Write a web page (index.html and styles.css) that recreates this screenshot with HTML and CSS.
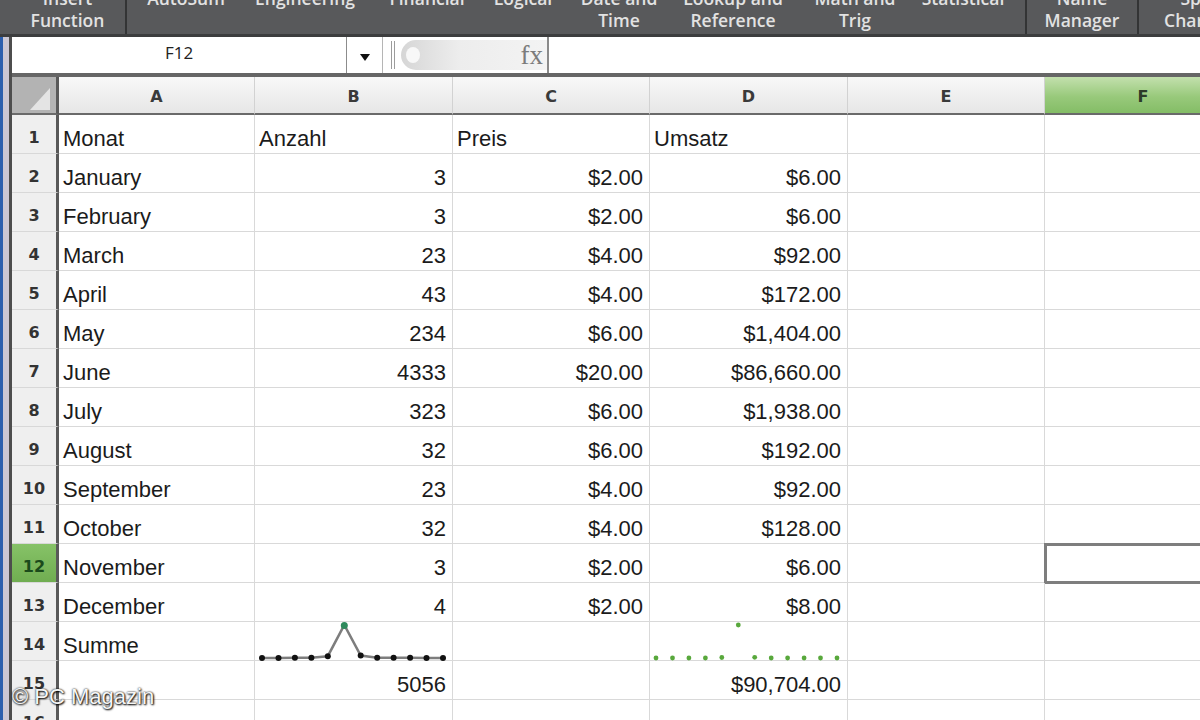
FILE: index.html
```html
<!DOCTYPE html>
<html lang="de">
<head>
    <meta charset="UTF-8">
    <meta name="viewport" content="width=device-width, initial-scale=1.0">
    <title>Umsatz - Sparklines</title>
    <link rel="stylesheet" href="styles.css">
</head>
<body>
    <div class="ribbon">
        <div class="tool tool-insert"><span>Insert</span><span>Function</span></div>
        <div class="tool-group">
            <div class="tool w-autosum"><span>AutoSum</span></div>
            <div class="tool w-engineering"><span>Engineering</span></div>
            <div class="tool w-financial"><span>Financial</span></div>
            <div class="tool w-logical"><span>Logical</span></div>
            <div class="tool w-date"><span>Date and</span><span>Time</span></div>
            <div class="tool w-lookup"><span>Lookup and</span><span>Reference</span></div>
            <div class="tool w-math"><span>Math and</span><span>Trig</span></div>
            <div class="tool w-stat"><span>Statistical</span></div>
        </div>
        <div class="tool tool-name"><span>Name</span><span>Manager</span></div>
        <div class="tool tool-special"><span>Special</span><span>Characters</span></div>
    </div>

    <div class="workspace">
        <div class="window-edge"></div>
        <div class="sheet">
            <div class="formula-bar">
                <div class="name-box">F12</div>
                <div class="name-drop"><span class="arrow"></span></div>
                <div class="grip"><span></span></div>
                <div class="fx-button"><span>fx</span></div>
                <div class="formula-input"></div>
            </div>

            <div class="grid">
                <div class="row head-row">
                    <div class="corner"><span class="corner-mark"></span></div>
                    <div class="col-head">A</div>
                    <div class="col-head">B</div>
                    <div class="col-head">C</div>
                    <div class="col-head">D</div>
                    <div class="col-head">E</div>
                    <div class="col-head active">F</div>
                </div>

                <div class="row">
                    <div class="row-head">1</div>
                    <div class="cell">Monat</div>
                    <div class="cell">Anzahl</div>
                    <div class="cell">Preis</div>
                    <div class="cell">Umsatz</div>
                    <div class="cell"></div>
                    <div class="cell"></div>
                </div>
                <div class="row">
                    <div class="row-head">2</div>
                    <div class="cell">January</div>
                    <div class="cell num">3</div>
                    <div class="cell num">$2.00</div>
                    <div class="cell num">$6.00</div>
                    <div class="cell"></div>
                    <div class="cell"></div>
                </div>
                <div class="row">
                    <div class="row-head">3</div>
                    <div class="cell">February</div>
                    <div class="cell num">3</div>
                    <div class="cell num">$2.00</div>
                    <div class="cell num">$6.00</div>
                    <div class="cell"></div>
                    <div class="cell"></div>
                </div>
                <div class="row">
                    <div class="row-head">4</div>
                    <div class="cell">March</div>
                    <div class="cell num">23</div>
                    <div class="cell num">$4.00</div>
                    <div class="cell num">$92.00</div>
                    <div class="cell"></div>
                    <div class="cell"></div>
                </div>
                <div class="row">
                    <div class="row-head">5</div>
                    <div class="cell">April</div>
                    <div class="cell num">43</div>
                    <div class="cell num">$4.00</div>
                    <div class="cell num">$172.00</div>
                    <div class="cell"></div>
                    <div class="cell"></div>
                </div>
                <div class="row">
                    <div class="row-head">6</div>
                    <div class="cell">May</div>
                    <div class="cell num">234</div>
                    <div class="cell num">$6.00</div>
                    <div class="cell num">$1,404.00</div>
                    <div class="cell"></div>
                    <div class="cell"></div>
                </div>
                <div class="row">
                    <div class="row-head">7</div>
                    <div class="cell">June</div>
                    <div class="cell num">4333</div>
                    <div class="cell num">$20.00</div>
                    <div class="cell num">$86,660.00</div>
                    <div class="cell"></div>
                    <div class="cell"></div>
                </div>
                <div class="row">
                    <div class="row-head">8</div>
                    <div class="cell">July</div>
                    <div class="cell num">323</div>
                    <div class="cell num">$6.00</div>
                    <div class="cell num">$1,938.00</div>
                    <div class="cell"></div>
                    <div class="cell"></div>
                </div>
                <div class="row">
                    <div class="row-head">9</div>
                    <div class="cell">August</div>
                    <div class="cell num">32</div>
                    <div class="cell num">$6.00</div>
                    <div class="cell num">$192.00</div>
                    <div class="cell"></div>
                    <div class="cell"></div>
                </div>
                <div class="row">
                    <div class="row-head">10</div>
                    <div class="cell">September</div>
                    <div class="cell num">23</div>
                    <div class="cell num">$4.00</div>
                    <div class="cell num">$92.00</div>
                    <div class="cell"></div>
                    <div class="cell"></div>
                </div>
                <div class="row">
                    <div class="row-head">11</div>
                    <div class="cell">October</div>
                    <div class="cell num">32</div>
                    <div class="cell num">$4.00</div>
                    <div class="cell num">$128.00</div>
                    <div class="cell"></div>
                    <div class="cell"></div>
                </div>
                <div class="row">
                    <div class="row-head active">12</div>
                    <div class="cell">November</div>
                    <div class="cell num">3</div>
                    <div class="cell num">$2.00</div>
                    <div class="cell num">$6.00</div>
                    <div class="cell"></div>
                    <div class="cell selected"></div>
                </div>
                <div class="row">
                    <div class="row-head">13</div>
                    <div class="cell">December</div>
                    <div class="cell num">4</div>
                    <div class="cell num">$2.00</div>
                    <div class="cell num">$8.00</div>
                    <div class="cell"></div>
                    <div class="cell"></div>
                </div>
                <div class="row">
                    <div class="row-head">14</div>
                    <div class="cell">Summe</div>
                    <div class="cell spark">
                        <svg width="197" height="38" viewBox="0 0 197 38">
                            <polyline class="spark-line" points="7,36 23.5,36 39.9,35.8 56.4,35.7 72.8,34.2 89.3,3 105.7,33.6 122.2,35.8 138.6,35.8 155.1,35.8 171.5,36 188,36"/>
                            <g class="spark-dot">
                                <circle cx="7" cy="36" r="3"/>
                                <circle cx="23.5" cy="36" r="3"/>
                                <circle cx="39.9" cy="35.8" r="3"/>
                                <circle cx="56.4" cy="35.7" r="3"/>
                                <circle cx="72.8" cy="34.2" r="3"/>
                                <circle cx="105.7" cy="33.6" r="3"/>
                                <circle cx="122.2" cy="35.8" r="3"/>
                                <circle cx="138.6" cy="35.8" r="3"/>
                                <circle cx="155.1" cy="35.8" r="3"/>
                                <circle cx="171.5" cy="36" r="3"/>
                                <circle cx="188" cy="36" r="3"/>
                            </g>
                            <circle class="spark-high" cx="89.3" cy="3.5" r="3.5"/>
                        </svg>
                    </div>
                    <div class="cell"></div>
                    <div class="cell spark">
                        <svg width="197" height="38" viewBox="0 0 197 38">
                            <g class="spark-green">
                                <circle cx="6" cy="36" r="2.4"/>
                                <circle cx="22.5" cy="36" r="2.4"/>
                                <circle cx="38.9" cy="36" r="2.4"/>
                                <circle cx="55.4" cy="36" r="2.4"/>
                                <circle cx="71.8" cy="35.5" r="2.4"/>
                                <circle cx="88.3" cy="3" r="2.4"/>
                                <circle cx="104.7" cy="35.3" r="2.4"/>
                                <circle cx="121.2" cy="36" r="2.4"/>
                                <circle cx="137.6" cy="36" r="2.4"/>
                                <circle cx="154.1" cy="36" r="2.4"/>
                                <circle cx="170.5" cy="36" r="2.4"/>
                                <circle cx="187" cy="36" r="2.4"/>
                            </g>
                        </svg>
                    </div>
                    <div class="cell"></div>
                    <div class="cell"></div>
                </div>
                <div class="row">
                    <div class="row-head">15</div>
                    <div class="cell"></div>
                    <div class="cell num">5056</div>
                    <div class="cell"></div>
                    <div class="cell num">$90,704.00</div>
                    <div class="cell"></div>
                    <div class="cell"></div>
                </div>
                <div class="row">
                    <div class="row-head">16</div>
                    <div class="cell"></div>
                    <div class="cell"></div>
                    <div class="cell"></div>
                    <div class="cell"></div>
                    <div class="cell"></div>
                    <div class="cell"></div>
                </div>
            </div>
        </div>
    </div>

    <div class="watermark">© PC Magazin</div>
</body>
</html>
```

FILE: styles.css
```css
body {
    margin: 0;
    height: 720px;
    overflow: hidden;
    background-color: #fff;
    font-family: "Liberation Sans", Arial, sans-serif;
}

/* Menüband oben */
.ribbon {
    display: flex;
    height: 34px;
    padding-left: 10px;
    overflow: hidden;
    background-color: #58595b;
    border-bottom: 3px solid #3c3d3e;
    font-family: "Open Sans", sans-serif;
    font-weight: 600;
    font-size: 17.5px;
    color: #e2e2e2;
}

.tool {
    display: flex;
    flex-direction: column;
    align-items: center;
    flex: none;
    margin-top: -13px;
    line-height: 22px;
    white-space: nowrap;
}

.tool-insert {
    width: 115px;
    border-right: 2px solid #333435;
}

.tool-group {
    display: flex;
    flex: none;
    width: 898px;
    border-right: 2px solid #333435;
}

.w-autosum { width: 118px; }
.w-engineering { width: 120px; }
.w-financial { width: 124px; }
.w-logical { width: 68px; }
.w-date { width: 124px; }
.w-lookup { width: 104px; }
.w-math { width: 140px; }
.w-stat { width: 76px; }

.tool-name {
    width: 110px;
    border-right: 2px solid #333435;
}

.tool-special {
    width: 142px;
}

/* Arbeitsbereich */
.workspace {
    display: flex;
}

.window-edge {
    flex: none;
    width: 12px;
    background: linear-gradient(to right, #2c5fae 0, #2c5fae 3px, #cbc7d4 3px, #cbc7d4 9px, #4d4d4d 9px);
}

.sheet {
    flex: 1;
    overflow: hidden;
}

/* Bearbeitungsleiste */
.formula-bar {
    display: flex;
    height: 36px;
    background-color: #fff;
    border-bottom: 4px solid #666;
}

.name-box {
    display: flex;
    align-items: center;
    justify-content: center;
    width: 334px;
    padding-bottom: 6px;
    border-right: 1px solid #8c8c8c;
    font-family: "Open Sans", sans-serif;
    font-size: 17px;
    color: #222;
}

.name-drop {
    display: flex;
    align-items: center;
    justify-content: center;
    width: 35px;
    padding-top: 4px;
    border-right: 1px solid #b5b5b5;
}

.arrow {
    width: 0;
    height: 0;
    border-top: 7px solid #111;
    border-left: 5px solid transparent;
    border-right: 5px solid transparent;
}

.grip {
    display: flex;
    align-items: center;
    width: 18px;
    padding-left: 8px;
    box-sizing: border-box;
}

.grip span {
    width: 2px;
    height: 28px;
    border-left: 1px solid #9c9c9c;
    border-right: 1px solid #9c9c9c;
}

.fx-button {
    position: relative;
    display: flex;
    align-items: center;
    justify-content: flex-end;
    width: 146px;
    margin: 3px 0 3px 0;
    padding-right: 4px;
    box-sizing: border-box;
    border-radius: 15px 0 0 15px;
    background: linear-gradient(to right, #d6d6d6, #ededed 40%, #f3f3f3);
    font-family: "Liberation Serif", serif;
    font-size: 27px;
    color: #7c7c7c;
}

.fx-button::before {
    content: "";
    position: absolute;
    left: 5px;
    top: 7px;
    width: 14px;
    height: 16px;
    border-radius: 50%;
    background-color: #f8f8f8;
}

.formula-input {
    flex: 1;
    border-left: 2px solid #8a8a8a;
}

/* Tabelle */
.grid {
    width: 1230px;
}

.row {
    display: grid;
    grid-template-columns: 47px 196px 198px 197px 198px 197px 197px;
    height: 39px;
}

.head-row {
    height: 38px;
}

.corner {
    position: relative;
    background-color: #b3b3b3;
    border-bottom: 2px solid #6a6a6a;
    border-right: 3px solid #595959;
}

.corner-mark {
    position: absolute;
    right: 6px;
    bottom: 3px;
    width: 0;
    height: 0;
    border-left: 20px solid transparent;
    border-bottom: 22px solid #e4e4e4;
}

.col-head {
    display: flex;
    align-items: center;
    justify-content: center;
    padding-top: 2px;
    background: linear-gradient(#f8f8f8, #e6e6e6);
    border-right: 1px solid #d2d2d2;
    border-bottom: 2px solid #6a6a6a;
    font-family: "DejaVu Sans", sans-serif;
    font-weight: bold;
    font-size: 16px;
    color: #3a3a3a;
}

.col-head.active {
    background: linear-gradient(#c3e0ad, #98c97b 55%, #84bd66);
    color: #2d3b28;
}

.row-head {
    display: flex;
    align-items: center;
    justify-content: center;
    padding-top: 6px;
    background-color: #efefef;
    border-bottom: 1px solid #d8d8d8;
    border-right: 3px solid #595959;
    font-family: "DejaVu Sans", sans-serif;
    font-weight: bold;
    font-size: 16px;
    color: #333;
}

.row-head.active {
    background: linear-gradient(#86c267, #70ad51);
    color: #1b4a1b;
}

.cell {
    display: flex;
    align-items: center;
    padding: 9px 6px 0 4px;
    overflow: hidden;
    white-space: nowrap;
    border-right: 1px solid #d9d9d9;
    border-bottom: 1px solid #d9d9d9;
    font-size: 22px;
    color: #1b1b1b;
}

.num {
    justify-content: flex-end;
}

.cell.selected {
    outline: 3px solid #7e7e7e;
    outline-offset: -2px;
}

.cell.spark {
    padding: 0;
    overflow: visible;
}

.spark svg {
    display: block;
    overflow: visible;
}

.spark-line {
    fill: none;
    stroke: #7d7d7d;
    stroke-width: 2.5;
}

.spark-dot {
    fill: #111;
}

.spark-high {
    fill: #2f8a5c;
}

.spark-green {
    fill: #58a83c;
}

/* Wasserzeichen */
.watermark {
    position: absolute;
    left: 12px;
    top: 684px;
    font-size: 22px;
    color: #f5f5f5;
    text-shadow: 0 0 2px #000, 1px 1px 2px #000;
}
```
